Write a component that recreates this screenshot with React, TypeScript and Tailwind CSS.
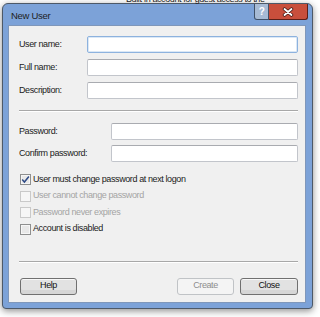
import React from "react";

const font = "font-['Liberation_Sans',Arial,sans-serif] text-[9px] tracking-[-0.4px]";

const TextBox = ({ focused, width }: { focused?: boolean; width: string }) => (
  <div
    className={
      "h-[17px] rounded-[2px] border bg-white " +
      width +
      (focused
        ? " border-[#8db2de] shadow-[inset_0_0_0_1px_#dbe8f6]"
        : " border-[#c2c5cb] border-t-[#a9abb0]")
    }
  />
);

const Field = ({ label, labelWidth, inputWidth, focused }: { label: string; labelWidth: string; inputWidth: string; focused?: boolean }) => (
  <div className="flex h-[17px] items-center">
    <span className={labelWidth + " text-[#1b1b1b]"}>{label}</span>
    <TextBox focused={focused} width={inputWidth} />
  </div>
);

const CheckRow = ({ label, checked, disabled }: { label: string; checked?: boolean; disabled?: boolean }) => (
  <div className="flex h-[11px] items-center gap-[2px]">
    <span
      className={
        "flex h-[11px] w-[11px] items-center justify-center border " +
        (disabled ? "border-[#c9c9c9] bg-[#f6f6f6]" : "border-[#8e8f8f] bg-[#e8e8e8] shadow-[inset_0_0_0_1px_#f6f6f6]")
      }
    >
      {checked && (
        <svg width="9" height="9" viewBox="0 0 9 9">
          <path d="M1.2 4.6 L3.4 7 L7.9 1.6" fill="none" stroke="#2e4a86" strokeWidth="1.5" />
        </svg>
      )}
    </span>
    <span className={disabled ? "text-[#a4a4a4]" : "text-[#1b1b1b]"}>{label}</span>
  </div>
);

const Button = ({ label, disabled, className }: { label: string; disabled?: boolean; className?: string }) => (
  <div
    className={
      "flex h-[17px] items-center justify-center rounded-[3px] border " +
      (className ?? "") +
      (disabled
        ? " border-[#c0c3c6] bg-[#f4f4f4] text-[#8d8d8d]"
        : " border-[#707070] bg-[#e2e2e2] text-[#111] shadow-[inset_0_1px_0_#f8f8f8,inset_0_-4px_0_#d6d6d6]")
    }
  >
    {label}
  </div>
);

const Separator = () => <div className="h-[2px] border-t border-b border-t-[#a8a8a8] border-b-white" />;

export default function App() {
  return (
    <div className={"h-[317px] w-[320px] overflow-hidden bg-white " + font}>
      <div className="h-[4px] overflow-hidden">
        <p className="-mt-[7px] ml-[126px] whitespace-nowrap text-[#222]">Built-in account for guest access to the</p>
      </div>
      <div className="-mt-[1px] ml-[2px] flex h-[306px] w-[311px] flex-col overflow-hidden rounded-t-[6px] rounded-b-[4px] border border-[#4d5968] bg-[#7ca2d8] shadow-[0_2px_7px_#00000073]">
        <div className="flex h-[21px] items-start">
          <span className="mt-[5px] ml-[8px] text-[9.5px] tracking-[-0.3px] text-[#1e1e1e]">New User</span>
          <div className="ml-auto mr-[4px] flex">
            <div className="flex h-[16px] w-[15px] items-center justify-center rounded-bl-[3px] border border-t-0 border-[#3f5168] bg-[#a7bbd5]">
              <span className="text-[10px] font-bold text-white">?</span>
            </div>
            <div className="flex h-[16px] w-[39px] items-center justify-center rounded-br-[3px] border border-l-0 border-t-0 border-[#5a1f18] bg-[#c94f3c]">
              <svg width="12" height="10" viewBox="0 0 12 10">
                <path d="M2.5 2 L9.5 8 M9.5 2 L2.5 8" stroke="#3f1510" strokeWidth="3.4" strokeLinecap="round" />
                <path d="M2.5 2 L9.5 8 M9.5 2 L2.5 8" stroke="#fff" strokeWidth="1.9" strokeLinecap="round" />
              </svg>
            </div>
          </div>
        </div>
        <div className="mb-[4px] ml-[5px] flex h-[278px] w-[298px] flex-col border border-[#7f97ba] bg-[#f0f0f0] pt-[10px] pr-[7px] pl-[10px]">
          <div className="flex flex-col gap-[6px]">
            <Field label="User name:" labelWidth="w-[68px]" inputWidth="w-[211px]" focused />
            <Field label="Full name:" labelWidth="w-[68px]" inputWidth="w-[211px]" />
            <Field label="Description:" labelWidth="w-[68px]" inputWidth="w-[211px]" />
          </div>
          <div className="mt-[11px]">
            <Separator />
          </div>
          <div className="mt-[11px] flex flex-col gap-[5px]">
            <Field label="Password:" labelWidth="w-[92px]" inputWidth="w-[187px]" />
            <Field label="Confirm password:" labelWidth="w-[92px]" inputWidth="w-[187px]" />
          </div>
          <div className="mt-[12px] ml-[1px] flex flex-col gap-[5.5px]">
            <CheckRow label="User must change password at next logon" checked />
            <CheckRow label="User cannot change password" disabled />
            <CheckRow label="Password never expires" disabled />
            <CheckRow label="Account is disabled" />
          </div>
          <div className="mt-[26px]">
            <Separator />
          </div>
          <div className="mt-[15px] flex items-center">
            <Button label="Help" className="ml-[1px] w-[57px]" />
            <Button label="Create" disabled className="ml-auto w-[57px]" />
            <Button label="Close" className="ml-[6px] w-[58px]" />
          </div>
        </div>
      </div>
    </div>
  );
}
